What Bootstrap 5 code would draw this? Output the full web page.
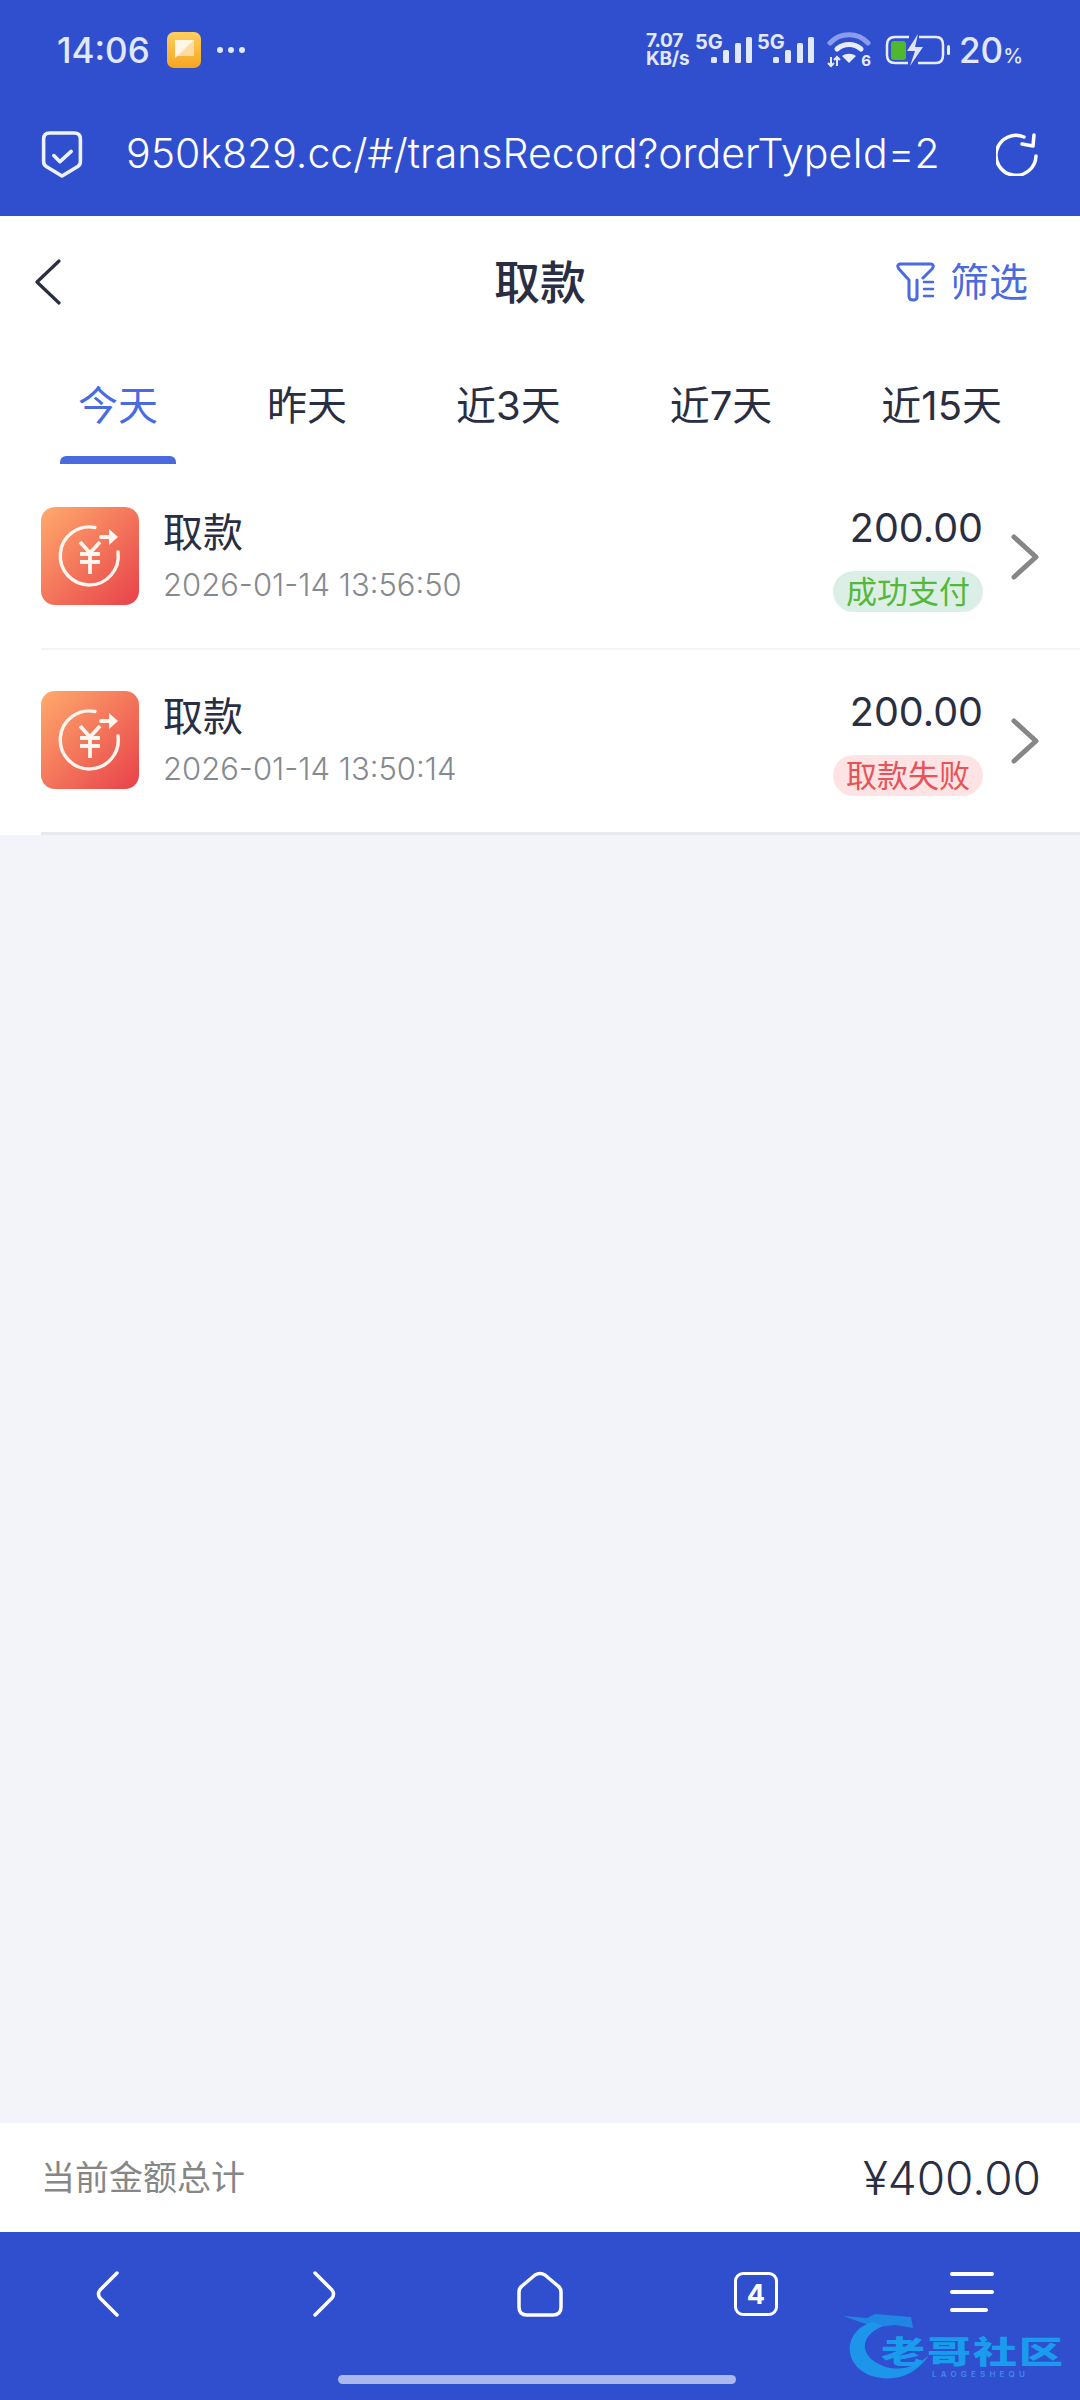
<!DOCTYPE html>
<html lang="zh-CN">
<head>
  <meta charset="UTF-8">
  <link href="https://cdn.jsdelivr.net/npm/bootstrap@5.3.3/dist/css/bootstrap.min.css" rel="stylesheet">
  <style>
    body {
      width: 1080px;
      height: 2400px;
      overflow: hidden;
      background: #f2f4f9;
      color: #2a2e42;
      font-family: "Inter", "Noto Sans CJK SC", sans-serif;
    }
    .phone { height: 2400px; position: relative; }
    .topbar { height: 216px; background: #304fcf; color: #fff; }
    .statusrow { height: 100px; padding: 0 57px 0 57px; color: #e2e8fb; }
    .clock { font-size: 35px; font-weight: 500; line-height: 1; width: 110px; }
    .app-dot { width: 34px; height: 36px; }
    .more-dots { margin-left: 15px; }
    .speed-wrap { width: 49px; }
    .speed-line { font-size: 19px; font-weight: 700; line-height: 18px; height: 18px; white-space: nowrap; letter-spacing: -0.2px; }
    .sig-group { height: 36px; }
    .sig-5g { font-size: 20px; font-weight: 700; line-height: 1; width: 26px; }
    .sig-bars { margin-left: -10px; }
    .wifi-box { margin-left: 12px; width: 44px; height: 36px; position: relative; }
    .wifi-num { position: absolute; right: 0; bottom: 0; font-size: 15px; font-weight: 700; line-height: 15px; color: #e8edfc; }
    .batt-ico { margin-left: 14px; }
    .batt-num { font-size: 35px; font-weight: 500; line-height: 1; margin-left: 8px; }
    .batt-pct { font-size: 20px; font-weight: 500; }
    .urlrow { height: 104px; padding: 4px 42px 0 41px; }
    .urltext { font-size: 41px; font-weight: 300; margin-left: 43px; white-space: nowrap; }

    .pagehead { height: 264px; background: #fff; position: relative; }
    .titlerow { height: 131px; padding: 0 52px 0 35px; }
    .titletext { font-size: 46px; font-weight: 500; margin: 0; line-height: 1; }
    .filterbtn { color: #4a6adf; font-size: 39px; line-height: 1; gap: 14px; }
    .tabrow { padding: 39px 78px 0 78px; height: 133px; border: 0; }
    .tabrow .nav-link {
      padding: 0;
      font-size: 40px;
      color: #2a2e42;
      position: relative;
      background: none;
      line-height: 1;
    }
    .tabrow .nav-link.active { color: #4a6adf; }
    .tabrow .nav-link.active::after {
      content: "";
      position: absolute;
      left: -18px;
      right: -18px;
      bottom: -38px;
      height: 8px;
      background: #4a6adf;
      border-radius: 6px 6px 0 0;
    }

    .recs { background: #fff; border-radius: 0; }
    .recs .list-group-item {
      padding: 27px 41px 0 0;
      margin-left: 41px;
      border-color: #f3f4f7;
      border-width: 0 0 2px;
      color: inherit;
      background: #fff;
    }
    .recs .list-group-item:first-child { height: 170px; }
    .recs .list-group-item:last-child { height: 185px; border-bottom: 3px solid #e8e9ee; padding-top: 41px; }
    .rec-ico { width: 98px; height: 98px; flex: none; }
    .rec-name { font-size: 40px; line-height: 1; margin-top: 6px; }
    .rec-time { font-size: 31px; line-height: 1; margin-top: 16px; color: #868a8f; font-weight: 300; }
    .rec-amt { font-size: 39.5px; line-height: 1; margin-top: 2px; text-align: right; font-weight: 400; }
    .pill-state { font-size: 31px; line-height: 41px; height: 41px; padding: 0 13px; border-radius: 21px; margin-top: 22px; }
    .pill-ok { background: #dcefe6; color: #55b83a; }
    .pill-bad { background: #fde3e4; color: #e85258; }
    .rec-go { margin: 27px 0 0 28px; flex: none; }

    .spacer { flex: 1; }
    .sumbar { height: 109px; background: #fff; padding: 0 39px 0 41px; }
    .sumlabel { font-size: 34px; color: #868686; font-weight: 400; }
    .sumval { font-size: 46px; line-height: 1; font-weight: 300; }
    .botbar { height: 168px; background: #304fcf; position: relative; }
    .navicons { padding: 38px 0 0; }
    .navslot { width: 216px; }
    .homeline { position: absolute; left: 338px; bottom: 16px; width: 398px; height: 9px; border-radius: 5px; background: #aab8ee; }
    .tabcount { width: 44px; height: 44px; border: 3px solid #fff; border-radius: 9px; color: #fff; font-size: 27px; font-weight: 700; line-height: 1; }
    .wmark { position: absolute; left: 843px; top: 2313px; width: 225px; height: 70px; }
    .wm-cn { position: absolute; left: 38px; top: 15px; font-family: "Noto Sans CJK SC", sans-serif; font-weight: 900; font-size: 44px; line-height: 1; letter-spacing: 2px; white-space: nowrap; color: #1a9cee; transform: scaleY(.7); }
    .wm-en { position: absolute; left: 89px; top: 57px; font-size: 8px; letter-spacing: 4.2px; line-height: 1; color: #3f8ae6; font-weight: 600; }
  </style>
</head>
<body>
<div class="phone d-flex flex-column">

  <!-- top blue part -->
  <div class="topbar">
    <div class="statusrow d-flex align-items-center">
      <div class="clock">14:06</div>
      <svg class="app-dot" viewBox="0 0 34 36">
        <defs><linearGradient id="ad" x1="0" y1="0" x2="0" y2="1"><stop offset="0" stop-color="#ffce5e"/><stop offset="1" stop-color="#f7a51f"/></linearGradient></defs>
        <rect width="34" height="36" rx="7" fill="url(#ad)"/>
        <path d="M8 8h19v16H8z" fill="#ffdca0"/>
        <path d="M8 8h19L8 26z" fill="#fff6e6"/>
      </svg>
      <svg class="more-dots" width="30" height="8" viewBox="0 0 30 8" fill="#e2e8fb"><circle cx="4" cy="4" r="3"/><circle cx="15" cy="4" r="3"/><circle cx="26" cy="4" r="3"/></svg>

      <div class="ms-auto d-flex align-items-center">
        <div class="speed-wrap">
          <div class="speed-line">7.07</div>
          <div class="speed-line">KB/s</div>
        </div>
        <div class="sig-group d-flex align-items-start">
          <span class="sig-5g">5G</span>
          <svg class="sig-bars" width="42" height="36" viewBox="0 0 42 36" fill="#e2e8fb"><rect x="0" y="25" width="6" height="6" rx="1.500"/><rect x="12" y="18" width="6" height="13" rx="1.500"/><rect x="24" y="11" width="6" height="20" rx="1.500"/><rect x="35" y="5" width="6" height="26" rx="1.500"/></svg>
        </div>
        <div class="sig-group d-flex align-items-start ms-1">
          <span class="sig-5g">5G</span>
          <svg class="sig-bars" width="42" height="36" viewBox="0 0 42 36" fill="#e2e8fb"><rect x="0" y="25" width="6" height="6" rx="1.500"/><rect x="12" y="18" width="6" height="13" rx="1.500"/><rect x="24" y="11" width="6" height="20" rx="1.500"/><rect x="35" y="5" width="6" height="26" rx="1.500"/></svg>
        </div>
        <!-- wifi -->
        <div class="wifi-box">
          <svg class="d-block" width="44" height="36" viewBox="0 0 44 36" fill="none">
            <path d="M3 11C13 0 31 0 41 11" stroke="#8b9cec" stroke-width="5" stroke-linecap="round"/>
            <path d="M10 17c7-6 17-6 24 0" stroke="#e8edfc" stroke-width="5" stroke-linecap="round"/>
            <path d="M15 24c4-3 10-3 14 0l-7 7z" fill="#e8edfc"/>
            <path d="M4 25v9M1 31l3 3 3-3M10 34v-9M7 28l3-3 3 3" stroke="#e8edfc" stroke-width="2"/>
          </svg>
          <span class="wifi-num">6</span>
        </div>
        <!-- battery -->
        <svg class="batt-ico" width="66" height="32" viewBox="0 0 66 32" fill="none">
          <path d="M24 3H10Q2 3 2 11v10q0 8 8 8h13M34 3h17q7 0 7 8v10q0 8-7 8H33" stroke="#e8edfc" stroke-width="2.500"/>
          <rect x="6" y="7" width="15" height="19" rx="3" fill="#4fb82e"/>
          <path d="M33 0L22 17h8l-5 15 13-19h-8z" fill="#dfe5fb"/>
          <rect x="62" y="11" width="3" height="10" rx="1.500" fill="#e8edfc"/>
        </svg>
        <div class="batt-num">20<span class="batt-pct">%</span></div>
      </div>
    </div>
    <div class="urlrow d-flex align-items-center">
      <svg width="42" height="47" viewBox="0 0 40 46" fill="none" stroke="#eef2ff" stroke-width="3.500" stroke-linejoin="round" stroke-linecap="round">
        <path d="M8 2h24q6 0 6 6v22q0 3-3 5L20 44 5 35q-3-2-3-5V8q0-6 6-6z"/>
        <path d="M12 24l6 6 11-10"/>
      </svg>
      <span class="urltext">950k829.cc/#/transRecord?orderTypeId=2</span>
      <svg class="ms-auto" width="42" height="44" viewBox="0 0 42 44" fill="none" stroke="#fff" stroke-width="3.500" stroke-linecap="round" stroke-linejoin="round">
        <path d="M28 5A20 20 0 1 0 40 24"/>
        <path d="M38 3l-1 11-11-2"/>
      </svg>
    </div>
  </div>

  <!-- title + tabs -->
  <div class="pagehead">
    <div class="titlerow d-flex align-items-center justify-content-between position-relative">
      <svg width="26" height="46" viewBox="0 0 26 46" fill="none" stroke="#2a2e42" stroke-width="3.200" stroke-linecap="round" stroke-linejoin="round"><path d="M24 2L2 23l22 21"/></svg>
      <h1 class="titletext position-absolute top-50 start-50 translate-middle">取款</h1>
      <div class="filterbtn d-flex align-items-center">
        <svg width="40" height="40" viewBox="0 0 40 40" fill="none" stroke="#4a6adf" stroke-width="3" stroke-linecap="round" stroke-linejoin="round">
          <path d="M4 2h31q4 1 1 5l-9 9M4 2Q0 3 3 7l10 11v16q0 4 4 4 3 0 4-2V18"/>
          <path d="M28 20h9M28 27h9M28 34h9" stroke-width="2.500"/>
        </svg>
        <span>筛选</span>
      </div>
    </div>
    <ul class="nav tabrow justify-content-between align-items-start">
      <li class="nav-item"><a class="nav-link active" href="#">今天</a></li>
      <li class="nav-item"><a class="nav-link" href="#">昨天</a></li>
      <li class="nav-item"><a class="nav-link" href="#">近3天</a></li>
      <li class="nav-item"><a class="nav-link" href="#">近7天</a></li>
      <li class="nav-item"><a class="nav-link" href="#">近15天</a></li>
    </ul>
  </div>

  <!-- records -->
  <div class="list-group list-group-flush recs">
    <div class="list-group-item d-flex align-items-start">
      <svg class="rec-ico" viewBox="0 0 98 98">
        <defs><linearGradient id="og" x1="0" y1="0" x2="1" y2="1"><stop offset="0" stop-color="#ffaa6c"/><stop offset="1" stop-color="#e8414a"/></linearGradient></defs>
        <rect width="98" height="98" rx="14" fill="url(#og)"/>
        <g fill="none" stroke="#fff5ef" stroke-width="3.400" stroke-linecap="round">
          <path d="M54 20.500A29 29 0 1 0 77 45"/>
          <path d="M39 35l10 11 10-11M39 47h20M39 55h20M49 46v21" stroke-width="3.800" stroke-linecap="butt"/>
          <path d="M60 30h11" stroke-width="3.800"/>
        </g>
        <path d="M68 22l9 8-9 8z" fill="#fff5ef"/>
      </svg>
      <div class="ms-4 flex-grow-1">
        <div class="rec-name">取款</div>
        <div class="rec-time">2026-01-14 13:56:50</div>
      </div>
      <div class="d-flex flex-column align-items-end">
        <div class="rec-amt">200.00</div>
        <span class="pill-state pill-ok">成功支付</span>
      </div>
      <svg class="rec-go" width="28" height="46" viewBox="0 0 28 46" fill="none" stroke="#868686" stroke-width="5" stroke-linecap="round" stroke-linejoin="round"><path d="M3 3l22 20L3 43"/></svg>
    </div>
    <div class="list-group-item d-flex align-items-start">
      <svg class="rec-ico" viewBox="0 0 98 98">
        <rect width="98" height="98" rx="14" fill="url(#og)"/>
        <g fill="none" stroke="#fff5ef" stroke-width="3.400" stroke-linecap="round">
          <path d="M54 20.500A29 29 0 1 0 77 45"/>
          <path d="M39 35l10 11 10-11M39 47h20M39 55h20M49 46v21" stroke-width="3.800" stroke-linecap="butt"/>
          <path d="M60 30h11" stroke-width="3.800"/>
        </g>
        <path d="M68 22l9 8-9 8z" fill="#fff5ef"/>
      </svg>
      <div class="ms-4 flex-grow-1">
        <div class="rec-name">取款</div>
        <div class="rec-time">2026-01-14 13:50:14</div>
      </div>
      <div class="d-flex flex-column align-items-end">
        <div class="rec-amt">200.00</div>
        <span class="pill-state pill-bad">取款失败</span>
      </div>
      <svg class="rec-go" width="28" height="46" viewBox="0 0 28 46" fill="none" stroke="#868686" stroke-width="5" stroke-linecap="round" stroke-linejoin="round"><path d="M3 3l22 20L3 43"/></svg>
    </div>
  </div>

  <div class="spacer"></div>

  <!-- total -->
  <div class="sumbar d-flex align-items-center justify-content-between">
    <span class="sumlabel">当前金额总计</span>
    <span class="sumval">¥400.00</span>
  </div>

  <!-- browser nav -->
  <div class="botbar">
    <div class="navicons d-flex justify-content-around align-items-center">
      <div class="navslot d-flex justify-content-center">
        <svg width="24" height="48" viewBox="0 0 24 48" fill="none" stroke="#fff" stroke-width="3.500" stroke-linecap="round" stroke-linejoin="round"><path d="M21 3L4 20q-3 4 0 8l17 17"/></svg>
      </div>
      <div class="navslot d-flex justify-content-center">
        <svg width="24" height="48" viewBox="0 0 24 48" fill="none" stroke="#fff" stroke-width="3.500" stroke-linecap="round" stroke-linejoin="round"><path d="M3 3l17 17q3 4 0 8L3 45"/></svg>
      </div>
      <div class="navslot d-flex justify-content-center">
        <svg width="46" height="46" viewBox="0 0 46 46" fill="none" stroke="#fff" stroke-width="3.500" stroke-linejoin="round"><path d="M18 4q5-3 10 0l13 11q3 2 3 6v15q0 8-8 8H10q-8 0-8-8V21q0-4 3-6z"/></svg>
      </div>
      <div class="navslot d-flex justify-content-center">
        <div class="tabcount d-flex align-items-center justify-content-center">4</div>
      </div>
      <div class="navslot d-flex justify-content-center">
        <svg width="44" height="46" viewBox="0 0 44 46" fill="none" stroke="#fff" stroke-width="4" stroke-linecap="round"><path d="M2 3h40M2 21h40M2 39h34"/></svg>
      </div>
    </div>
    <div class="homeline"></div>
  </div>

  <!-- watermark over the nav -->
  <div class="wmark">
    <svg class="position-absolute top-0 start-0" width="100" height="70" viewBox="0 0 100 70" fill="none">
      <path d="M0 3l24 2 8-4 36 3 2 11-18-3-18 2-14-4z" fill="#1d8fe8" opacity=".85"/>
      <path d="M30 9C4 15 -4 48 26 62c22 8 46 2 60-20-14 14-36 18-52 8C16 40 18 22 40 13z" fill="#1d95ea"/>
    </svg>
    <span class="wm-cn">老哥社区</span>
    <span class="wm-en">LAOGESHEQU</span>
  </div>
</div>
</body>
</html>
